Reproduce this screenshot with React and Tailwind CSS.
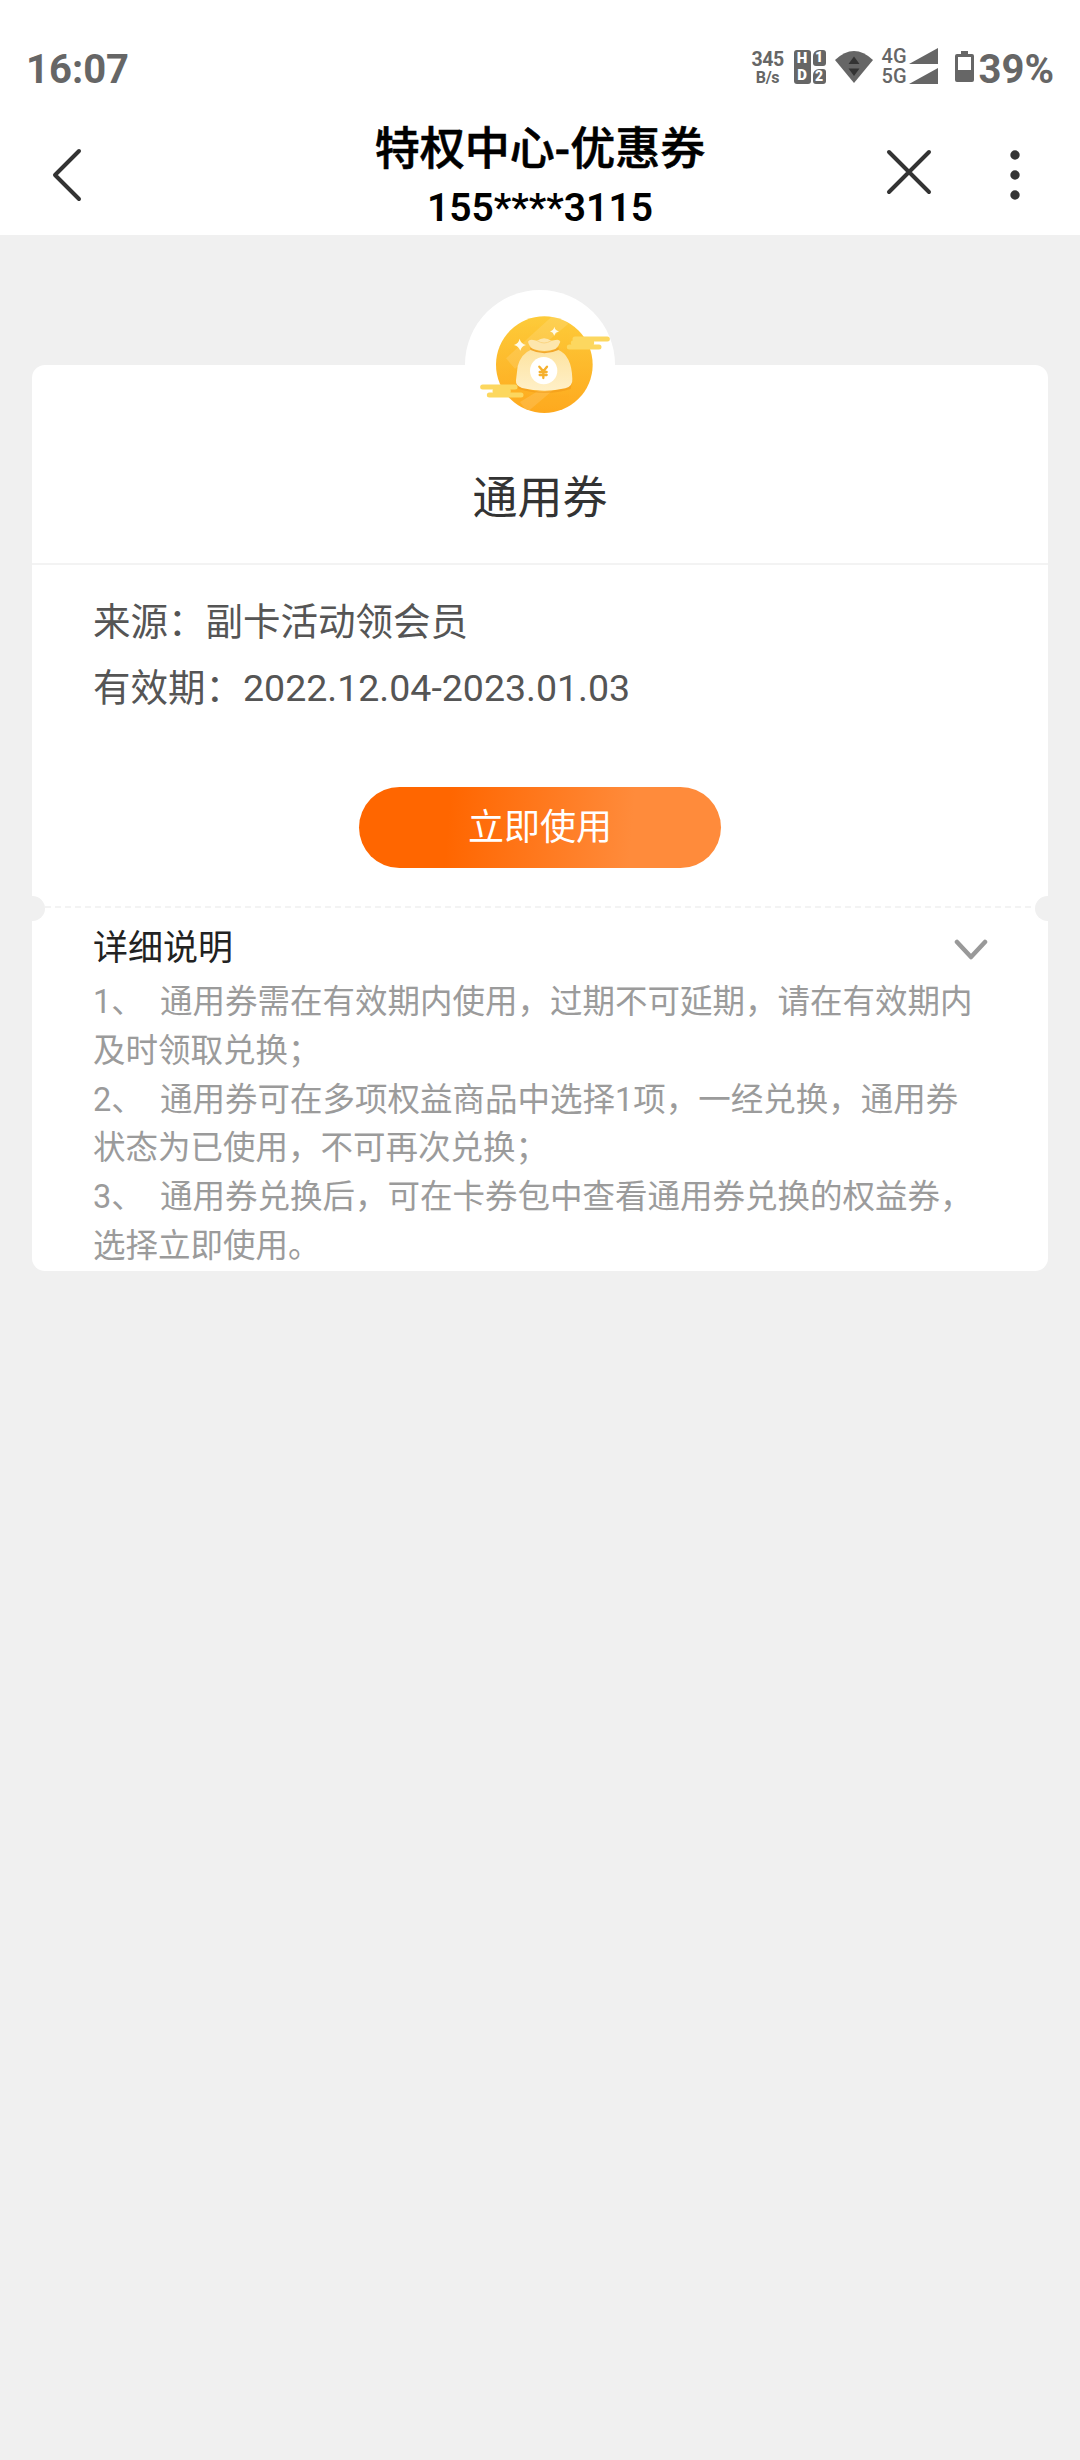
const rules = [
  '1、\u00a0\u00a0通用券需在有效期内使用，过期不可延期，请在有效期内及时领取兑换；',
  '2、\u00a0\u00a0通用券可在多项权益商品中选择1项，一经兑换，通用券状态为已使用，不可再次兑换；',
  '3、\u00a0\u00a0通用券兑换后，可在卡券包中查看通用券兑换的权益券，选择立即使用。',
];

function StatusBar() {
  return (
    <div className="flex h-[108px] items-center justify-between pt-[28px] pr-[26px] pl-[26px] text-[#666]">
      <div className="pt-[3px] text-[40px] leading-none font-bold">16:07</div>
      <div className="flex items-center">
        <div className="flex w-[32px] flex-col items-center font-bold">
          <span className="text-[19.5px] leading-[18px] tracking-[-0.5px]">345</span>
          <span className="text-[16px] leading-[17px] tracking-[-0.3px]">B/s</span>
        </div>

        <div className="-mt-[2px] ml-[10px] flex gap-[2px] text-center text-[15px] leading-[17px] font-black text-white">
          <div className="h-[34px] w-[17px] rounded-[3px] bg-[#666]">
            <div>H</div>
            <div>D</div>
          </div>
          <div className="flex w-[13px] flex-col gap-[3px] text-[14px] leading-[15.5px]">
            <div className="rounded-[3px] rounded-tl-[6px] bg-[#666]">1</div>
            <div className="rounded-[3px] rounded-tl-[6px] bg-[#666]">2</div>
          </div>
        </div>

        <svg className="-mt-[4px] ml-[9px]" width="38" height="33" viewBox="0 0 38 33">
          <path d="M0 10Q19 -8 38 10L19 33Z" fill="#666" />
          <path d="M13.5 14L19 6.5L24.5 14ZM13.5 18.5H24.5L19 26Z" fill="#333" />
        </svg>

        <div className="-mt-[4px] ml-[9px] w-[27px] text-[20px] leading-[20px] font-medium">
          <div>4G</div>
          <div>5G</div>
        </div>
        <svg className="-mt-[4px]" width="29" height="36" viewBox="0 0 29 36">
          <path d="M0 16L29 0V16ZM0 36L29 20V36Z" fill="#666" />
        </svg>

        <svg className="-mt-[3px] ml-[17px]" width="19" height="31" viewBox="0 0 19 31">
          <path
            fillRule="evenodd"
            d="M6 0H13V3H17Q19 3 19 5V29Q19 31 17 31H2Q0 31 0 29V5Q0 3 2 3H6ZM3 6V19H16V6Z"
            fill="#666"
          />
        </svg>
        <div className="ml-[5px] pt-[3px] text-[40px] leading-none font-bold">39%</div>
      </div>
    </div>
  );
}

function NavBar() {
  return (
    <div className="grid h-[127px] grid-cols-[1fr_auto_1fr] text-[#333]">
      <svg className="mt-[39px] ml-[51px]" width="32" height="56" viewBox="0 0 32 56" fill="none">
        <path d="M28 4L4 28L28 52" stroke="currentColor" strokeWidth="4" strokeLinecap="round" strokeLinejoin="round" />
      </svg>
      <div className="pt-[12px] text-center text-black">
        <h1 className="text-[45px] leading-[60px] font-medium [-webkit-text-stroke:0.6px_black]">特权中心-优惠券</h1>
        <p className="text-[39px] leading-[56px] font-semibold">155****3115</p>
      </div>
      <div className="flex justify-end pr-[60.5px]">
        <svg className="mt-[40px]" width="48" height="48" viewBox="0 0 48 48">
          <path d="M4 4L44 44M44 4L4 44" stroke="currentColor" strokeWidth="4" strokeLinecap="round" />
        </svg>
        <svg className="mt-[42px] ml-[77px]" width="10" height="50" viewBox="0 0 10 50" fill="currentColor">
          <circle cx="5" cy="5" r="4.7" />
          <circle cx="5" cy="25" r="4.7" />
          <circle cx="5" cy="45" r="4.7" />
        </svg>
      </div>
    </div>
  );
}

function MoneyBag() {
  return (
    <svg width="150" height="150" viewBox="75 59 450 450">
      <defs>
        <linearGradient id="coin" x1="0" y1="0" x2="0" y2="1">
          <stop offset="0" stopColor="#fdcb3a" />
          <stop offset="1" stopColor="#fea91e" />
        </linearGradient>
        <linearGradient id="bag" x1="0" y1="0" x2="0" y2="1">
          <stop offset="0" stopColor="#fde3a0" />
          <stop offset="1" stopColor="#fff0c8" />
        </linearGradient>
        <clipPath id="coinClip">
          <circle cx="313" cy="283" r="145" />
        </clipPath>
      </defs>
      <circle cx="313" cy="283" r="145" fill="url(#coin)" />
      <g clipPath="url(#coinClip)" fill="#fff" opacity="0.12">
        <path d="M198 264L345 130L385 160L225 295Z" />
        <path d="M240 395L330 340L350 350L262 425Z" />
      </g>
      <g stroke="#fcd75f" strokeWidth="15" strokeLinecap="round">
        <path d="M405 206H502M400 217H455M388 230H477" />
        <path d="M128 350H225M165 362H205M148 374H243" />
      </g>
      <path d="M230 340Q270 366 313 364Q358 364 396 336L392 356Q315 380 236 356Z" fill="#e98a10" opacity="0.35" />
      <path
        d="M273 238Q243 250 233 288L228 330Q226 346 246 353Q313 369 376 354Q399 347 397 325Q395 255 354 238Q313 250 273 238Z"
        fill="url(#bag)"
      />
      <path d="M269 231Q313 256 357 231L355 239Q313 259 272 239Z" fill="#f2a72c" />
      <path
        d="M264 214Q268 206 280 209L291 211Q312 196 334 211L346 209Q358 206 361 214Q356 229 346 236Q313 248 280 236Q267 228 264 214Z"
        fill="#fde6ad"
      />
      <path d="M291 211Q312 225 334 211" fill="none" stroke="#fbd582" strokeWidth="3" />
      <circle cx="311" cy="301" r="41" fill="#fff" />
      <path
        d="M298 289L310 303L321 289M310 303V323M299 305H320M299 314H320"
        fill="none"
        stroke="#f5b02e"
        strokeWidth="7"
        strokeLinecap="round"
      />
      <path d="M239 205Q242 220 258 224Q244 228 241 241Q236 228 222 224Q236 219 239 205Z" fill="#fffbe8" />
      <path d="M343 169Q345 180 357 183Q346 186 343 196Q340 186 330 183Q341 180 343 169Z" fill="#fffbe8" />
    </svg>
  );
}

export default function App() {
  return (
    <div className="min-h-[2460px] w-[1080px] bg-[#f0f0f0] font-['Roboto','Noto_Sans_CJK_SC',sans-serif]" lang="zh-CN">
      <header className="h-[235px] bg-white">
        <StatusBar />
        <NavBar />
      </header>

      <main className="px-[32px] pt-[130px]">
        <section className="h-[906px] rounded-[13px] bg-white">
          <div className="flex h-[200px] flex-col items-center border-b-2 border-[#f3f3f3]">
            <div className="-mt-[75px] rounded-full bg-white">
              <MoneyBag />
            </div>
            <h2 className="mt-[25px] text-[45px] leading-[68px] text-[#333]">通用券</h2>
          </div>

          <div className="h-[331px] pt-[24px] text-[37.5px] leading-[66px] text-[#555]">
            <p className="px-[61px]">来源：副卡活动领会员</p>
            <p className="px-[61px]">有效期：2022.12.04-2023.01.03</p>
            <button className="mx-auto mt-[66px] block h-[81px] w-[362px] rounded-full bg-[linear-gradient(95deg,#ff6600_25%,#ff8b3b_75%)] pt-[2px] text-[36px] leading-[79px] text-white">
              立即使用
            </button>
          </div>

          <div className="flex h-[25px] justify-between overflow-hidden">
            <div className="-ml-[12px] h-[25px] w-[25px] shrink-0 rounded-full bg-[#f0f0f0]" />
            <div className="mt-[10px] h-[2px] grow bg-[repeating-linear-gradient(90deg,#f3f3f3_0_6px,#fff_6px_10px)]" />
            <div className="-mr-[12px] h-[25px] w-[25px] shrink-0 rounded-full bg-[#f0f0f0]" />
          </div>

          <div className="px-[61px]">
            <div className="flex h-[57px] items-center justify-between">
              <h3 className="-mt-[1px] text-[35px] leading-[52px] text-[#222]">详细说明</h3>
              <svg className="mt-[1px] -mr-[1px]" width="34" height="22" viewBox="0 0 34 22" fill="none">
                <path d="M3 3L17 18L31 3" stroke="#999" strokeWidth="4.5" strokeLinecap="round" strokeLinejoin="round" />
              </svg>
            </div>
            {rules.map((rule) => (
              <p key={rule} className="text-[32.5px] leading-[48.8px] text-[#9b9b9b]">
                {rule}
              </p>
            ))}
          </div>
        </section>
      </main>
    </div>
  );
}
